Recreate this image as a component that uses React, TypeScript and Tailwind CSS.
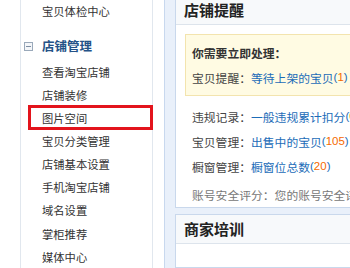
const sideItems = [
  "查看淘宝店铺",
  "店铺装修",
  "图片空间",
  "宝贝分类管理",
  "店铺基本设置",
  "手机淘宝店铺",
  "域名设置",
  "掌柜推荐",
  "媒体中心",
];

const Sidebar = () => {
  return (
    <div className="w-[133px] shrink-0 border-x border-[#e1e7ee] bg-white text-[#333]">
      <div className="h-[23px] flex items-center pl-[21px] text-[11.3px]">宝贝体检中心</div>
      <div className="h-[24px] mt-[11px] flex items-center pl-[3px]">
        <span className="w-[9px] h-[9px] border border-[#9aa9ba] bg-[#f4f6f9] flex items-center justify-center">
          <span className="w-[5px] h-[1px] bg-[#7d8ea3]" />
        </span>
        <span className="ml-[9px] text-[12.5px] font-bold text-[#245287]">店铺管理</span>
      </div>
      <div className="mt-[2.5px] flex flex-col">
        {sideItems.map((item) => (
          <div key={item} className="relative h-[23.15px] flex items-center pl-[21px] text-[11.3px]">
            {item}
            {item === "图片空间" && (
              <span className="absolute left-[7px] -right-[1px] top-[-2px] bottom-0 border-[3px] border-[#e3141c]" />
            )}
          </div>
        ))}
      </div>
    </div>
  );
};

const PanelHeader = ({ title }: { title: string }) => (
  <div className="h-[29px] pl-[8px] flex items-center pt-[1px] border-b border-[#dde4ec] bg-[#f7f9fb] text-[15px] font-bold text-[#222]">
    {title}
  </div>
);

const Row = ({ label, link, num, muted }: { label: string; link?: string; num?: string; muted?: boolean }) => (
  <div className={`h-[25px] flex items-center whitespace-nowrap ${muted ? "text-[#777]" : "text-[#444]"}`}>
    <span>{label}</span>
    {link && <span className="text-[#1c6cb8]">{link}</span>}
    {num !== undefined && (
      <span className="text-[#1c6cb8] font-['Liberation_Sans',sans-serif] text-[11.5px]">
        (<span className="text-[#f56a00]">{num}</span>)
      </span>
    )}
  </div>
);

export default function App() {
  return (
    <div className="w-[350px] h-[268px] overflow-hidden flex bg-white font-['Noto_Sans_CJK_SC',sans-serif] text-[11.8px]">
      <div className="w-[20px] shrink-0" />
      <Sidebar />
      <div className="w-[11px] shrink-0" />
      <div className="w-[300px] shrink-0 border-l border-[#c8d8ee] bg-[#e9f0fa] pl-[10px] flex flex-col gap-[6px] -mt-[5px]">
        <div className="bg-white border border-[#c9d8ec] h-[227px] flex flex-col">
          <PanelHeader title="店铺提醒" />
          <div className="pl-[9px] pt-[9px]">
            <div className="h-[62px] border border-[#f3e4ae] bg-[#fffbe3] pl-[6px] pt-[5px]">
              <div className="h-[25px] flex items-center font-bold text-[#333] whitespace-nowrap">你需要立即处理：</div>
              <div>
                <Row label="宝贝提醒：" link="等待上架的宝贝" num="1" />
              </div>
            </div>
            <div className="pl-[7px] mt-[8px] flex flex-col">
              <Row label="违规记录：" link="一般违规累计扣分" num="0" />
              <Row label="宝贝管理：" link="出售中的宝贝" num="105" />
              <Row label="橱窗管理：" link="橱窗位总数" num="20" />
              <div className="mt-[3px]">
                <Row label="账号安全评分：您的账号安全评分为" muted />
              </div>
            </div>
          </div>
        </div>
        <div className="bg-white border border-[#c9d8ec] h-[80px]">
          <PanelHeader title="商家培训" />
        </div>
      </div>
    </div>
  );
}
